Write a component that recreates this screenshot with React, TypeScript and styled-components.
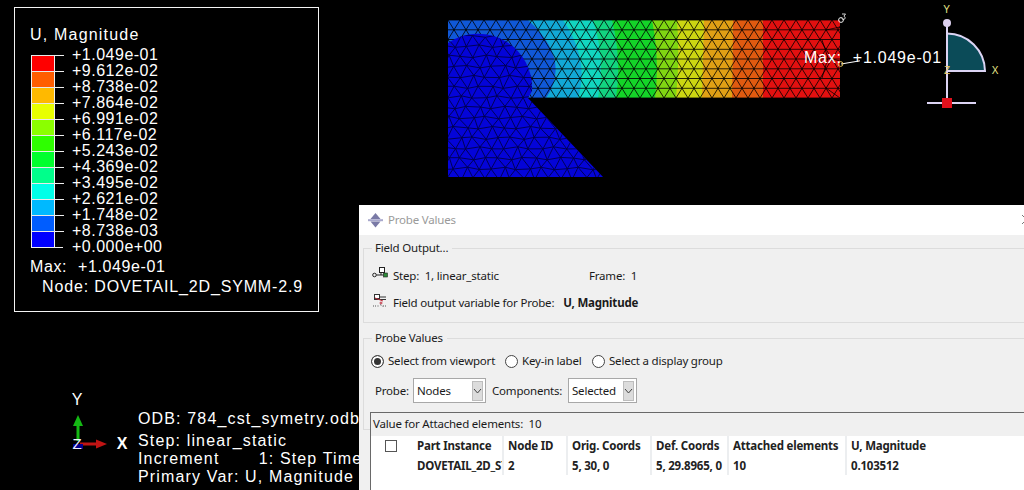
import React from "react";
import styled, { createGlobalStyle } from "styled-components";

const GlobalStyle = createGlobalStyle`
  html, body { margin: 0; padding: 0; background: #000; }
`;

const Stage = styled.div`
  position: relative;
  width: 1024px;
  height: 490px;
  overflow: hidden;
  background: #000;
  color: #fff;
  font-family: "Liberation Sans", Arial, sans-serif;
  font-size: 16px;
`;

/* ---------- viewport items (free canvas) ---------- */
const Legend = styled.section`
  position: absolute;
  left: 14px;
  top: 7px;
  box-sizing: content-box;
  width: 288px;
  height: 286px;
  border: 1px solid #f4f4f4;
  padding: 17px 0 0 15px;
  line-height: 20px;
`;
const LegendTitle = styled.div`
  height: 21px;
  letter-spacing: 1.2px;
  white-space: nowrap;
`;
const Scale = styled.div`
  display: flex;
  height: 211px;
`;
const ColorBar = styled.div`
  display: flex;
  flex-direction: column;
  box-sizing: border-box;
  width: 24px;
  height: 193px;
  margin-top: 9px;
  margin-left: 1px;
  border: 1px solid #f0f0f0;
  border-width: 0 1px 1px 1px;
`;
const ColorCell = styled.div<{ $c: string }>`
  position: relative;
  flex: 1;
  background: ${(p) => p.$c};
  border-top: 1px solid #e8e8e8;
  &::after {
    content: "";
    position: absolute;
    left: 100%;
    top: -1px;
    width: 9px;
    height: 1px;
    margin-left: 1px;
    background: #eee;
  }
`;
const BottomTick = styled.div`
  position: relative;
  &::after {
    content: "";
    position: absolute;
    left: 24px;
    top: -1px;
    width: 9px;
    height: 1px;
    background: #eee;
  }
`;
const ScaleLabels = styled.div`
  margin-left: 17px;
  margin-top: 1px;
  letter-spacing: 0.5px;
`;
const ScaleLabel = styled.div`
  height: 16px;
  line-height: 16px;
  white-space: nowrap;
`;
const MaxLine = styled.div<{ $indent?: number; $spacing: number; $word?: number }>`
  height: 20px;
  line-height: 20px;
  margin-left: ${(p) => p.$indent ?? 0}px;
  letter-spacing: ${(p) => p.$spacing}px;
  word-spacing: ${(p) => p.$word ?? 0}px;
  white-space: pre;
`;

const Mesh = styled.svg`
  position: absolute;
  left: 440px;
  top: 0;
  display: block;
`;
const ViewTriad = styled.svg`
  position: absolute;
  left: 0;
  top: 0;
  display: block;
`;
const MaxAnnotation = styled.div`
  position: absolute;
  left: 804px;
  top: 47px;
  line-height: 22px;
  letter-spacing: 0.75px;
  word-spacing: 6px;
  white-space: nowrap;
`;
const StateBlock = styled.div`
  position: absolute;
  left: 138px;
  top: 409px;
  white-space: pre;
  letter-spacing: 1.15px;
`;
const StateLine = styled.div<{ $h: number }>`
  height: ${(p) => p.$h}px;
  line-height: 20px;
`;

/* ---------- dialog ---------- */
const Dialog = styled.div`
  position: absolute;
  left: 359px;
  top: 205px;
  width: 680px;
  height: 285px;
  display: flex;
  flex-direction: column;
  background: #f0f0f0;
  color: #1a1a1a;
  font-family: "Noto Sans", "Open Sans", sans-serif;
  font-size: 11.5px;
  letter-spacing: -0.2px;
  line-height: 16px;
`;
const TitleBar = styled.header`
  flex: 0 0 30px;
  display: flex;
  align-items: center;
  gap: 5px;
  padding-left: 9px;
  background: #fff;
  color: #9a9a9a;
  position: relative;
`;
const CloseGlyph = styled.svg`
  position: absolute;
  left: 662px;
  top: 9px;
`;
const Group = styled.fieldset<{ $h: number; $mt: number }>`
  box-sizing: border-box;
  height: ${(p) => p.$h}px;
  margin: ${(p) => p.$mt}px 0 0 4px;
  padding: 0 0 0 8px;
  min-width: 0;
  border: 1px solid #dcdcdc;
  border-right: none;
`;
const GroupTitle = styled.legend`
  padding: 0 4px 0 3px;
  margin-left: 0;
  color: #222;
`;
const InfoRow = styled.div<{ $mt: number }>`
  display: flex;
  align-items: center;
  height: 16px;
  margin-top: ${(p) => p.$mt}px;
  white-space: pre;
`;
const InfoIcon = styled.svg<{ $up: number }>`
  flex: 0 0 16px;
  margin-right: 5px;
  margin-top: -${(p) => p.$up}px;
`;
const FrameInfo = styled.span`
  position: absolute;
  left: 230px;
`;
const Strong = styled.b`
  font-weight: 700;
  margin-left: 9px;
`;
const RadioRow = styled.div`
  display: flex;
  align-items: center;
  height: 16px;
  margin-top: 7px;
  margin-left: -1px;
`;
const RadioItem = styled.label<{ $w: number }>`
  display: flex;
  align-items: center;
  gap: 4px;
  width: ${(p) => p.$w}px;
  white-space: nowrap;
`;
const RadioDot = styled.span<{ $on?: boolean }>`
  box-sizing: border-box;
  flex: 0 0 13px;
  height: 13px;
  border: 1px solid #444;
  border-radius: 50%;
  background: ${(p) => (p.$on ? "#333" : "#fff")};
  box-shadow: ${(p) => (p.$on ? "inset 0 0 0 2px #fff" : "none")};
`;
const SelectRow = styled.div`
  display: flex;
  align-items: center;
  height: 25px;
  margin-top: 9px;
  margin-left: 3px;
`;
const SelectLabel = styled.span<{ $w: number }>`
  width: ${(p) => p.$w}px;
  white-space: nowrap;
`;
const Select = styled.div<{ $w: number }>`
  box-sizing: border-box;
  width: ${(p) => p.$w}px;
  height: 25px;
  display: flex;
  align-items: center;
  justify-content: space-between;
  padding: 0 2px 0 3px;
  margin-right: 6px;
  background: #fff;
  border: 1px solid #a8a8a8;
`;
const SelectArrow = styled.span`
  box-sizing: border-box;
  width: 11px;
  height: 20px;
  display: flex;
  align-items: center;
  justify-content: center;
  background: #dcdcdc;
  border: 1px solid #bdbdbd;
`;
const ResultFrame = styled.div`
  position: absolute;
  left: 11px;
  top: 207px;
  width: 669px;
  height: 78px;
  box-sizing: border-box;
  display: flex;
  flex-direction: column;
  border-top: 1px solid #696969;
  border-left: 1px solid #696969;
  background: #f0f0f0;
`;
const ResultCaption = styled.div`
  flex: 0 0 23px;
  line-height: 21px;
  padding-left: 2px;
  white-space: pre;
`;
const TableArea = styled.div`
  flex: 1;
  background: #fff;
`;
const Table = styled.div`
  display: grid;
  grid-template-columns: 41px 90px 64px 84px 77px 118px 160px;
  grid-auto-rows: 19.5px;
  height: 39px;
  font-weight: 700;
  color: #222;
`;
const Cell = styled.div<{ $first?: boolean }>`
  box-sizing: border-box;
  overflow: hidden;
  white-space: nowrap;
  padding: 2px 0 0 ${(p) => (p.$first ? 5 : 4)}px;
  line-height: 15px;
  border-left: ${(p) => (p.$first ? "none" : "2px solid #eceef0")};
`;
const CheckCell = styled.div`
  grid-row: span 2;
  padding: 4px 0 0 14px;
`;
const CheckBox = styled.span`
  display: block;
  box-sizing: border-box;
  width: 12px;
  height: 12px;
  background: #fff;
  border: 1px solid #555;
`;

/* ---------- data ---------- */
const COLORS = [
  "#ff0000", "#ff5d00", "#ffb900", "#e8ff00", "#8bff00", "#2eff00",
  "#00ff2e", "#00ff8b", "#00ffe8", "#00b9ff", "#005dff", "#0000ff",
];
const LABELS = [
  "+1.049e-01", "+9.612e-02", "+8.738e-02", "+7.864e-02", "+6.991e-02", "+6.117e-02", "+5.243e-02",
  "+4.369e-02", "+3.495e-02", "+2.621e-02", "+1.748e-02", "+8.738e-03", "+0.000e+00",
];
// band colour, then right boundary: top x, control x, bottom x
const BANDS: [string, number, number, number][] = [
  ["#e21010", 840, 840, 840],
  ["#e05a10", 763, 763, 763],
  ["#e0a015", 733, 733, 732],
  ["#ccd612", 704, 703, 702],
  ["#80d612", 677, 680, 676],
  ["#14d428", 652, 660, 655],
  ["#12d480", 612, 622, 616],
  ["#12d6c0", 593, 606, 598],
  ["#12a8d6", 563, 590, 578],
  ["#1058d8", 528, 572, 546],
];

function triLines(x0: number, x1: number, y0: number, y1: number, dx: number, dy: number, warp: number) {
  const rows = Math.round((y1 - y0) / dy);
  const cols = Math.ceil((x1 - x0) / dx) + 2;
  const P = (c: number, r: number): [number, number] => {
    const x = x0 + c * dx + (r % 2 ? dx / 2 : 0) - dx;
    const y = y0 + r * dy;
    const a = Math.sin(x * 0.21 + y * 0.13) * warp;
    const b = Math.cos(x * 0.17 - y * 0.19) * warp;
    return [x + a, y + b];
  };
  let d = "";
  const seg = (a: [number, number], b: [number, number]) => {
    d += `M${a[0].toFixed(1)} ${a[1].toFixed(1)}L${b[0].toFixed(1)} ${b[1].toFixed(1)}`;
  };
  for (let r = 0; r <= rows; r++) {
    for (let c = 0; c <= cols; c++) {
      if (c < cols) seg(P(c, r), P(c + 1, r));
      if (r < rows) {
        seg(P(c, r), P(c, r + 1));
        if (r % 2) {
          if (c < cols) seg(P(c, r), P(c + 1, r + 1));
        } else if (c > 0) {
          seg(P(c, r), P(c - 1, r + 1));
        }
      }
    }
  }
  return d;
}

const STRIP_MESH = triLines(448, 840, 20, 98, 12, 9.75, 0);
const BODY_MESH = triLines(448, 610, 36, 178, 12.5, 10.2, 1.4);
const RIGHT_END =
  "M822 40L828 58L822 78M828 58L840 61M826 30L840 27M826 88L840 98";

function App() {
  return (
    <Stage>
      <GlobalStyle />

      <Legend>
        <LegendTitle>U, Magnitude</LegendTitle>
        <Scale>
          <div>
            <ColorBar>
              {COLORS.map((c) => (
                <ColorCell key={c} $c={c} />
              ))}
            </ColorBar>
            <BottomTick />
          </div>
          <ScaleLabels>
            {LABELS.map((l) => (
              <ScaleLabel key={l}>{l}</ScaleLabel>
            ))}
          </ScaleLabels>
        </Scale>
        <MaxLine $spacing={0.6} $word={6}>Max: +1.049e-01</MaxLine>
        <MaxLine $indent={12} $spacing={0.85}>Node: DOVETAIL_2D_SYMM-2.9</MaxLine>
      </Legend>

      <Mesh width="420" height="190" viewBox="440 0 420 190">
        <defs>
          <clipPath id="strip">
            <rect x="448" y="20" width="392" height="78" />
          </clipPath>
          <clipPath id="body">
            <path d="M448 43A54 54 0 0 1 532 91L528 98L603 177H448Z" />
          </clipPath>
        </defs>
        {BANDS.map(([c, t, m, b]) => (
          <path key={c} d={`M448 20L${t} 20Q${m} 60 ${b} 98L448 98Z`} fill={c} />
        ))}
        <g clipPath="url(#strip)">
          <path d={STRIP_MESH} stroke="#000" strokeWidth="0.9" fill="none" opacity="0.9" />
          <path d={RIGHT_END} stroke="#000" strokeWidth="0.9" fill="none" opacity="0.85" />
        </g>
        <g clipPath="url(#body)">
          <rect x="448" y="20" width="160" height="160" fill="#0404d8" />
          <path d={BODY_MESH} stroke="#00004a" strokeWidth="0.9" fill="none" />
        </g>
        <path d="M841 64L877 58" stroke="#fff" strokeWidth="1" />
        <circle cx="840.5" cy="64" r="2.4" fill="none" stroke="#e8c860" strokeWidth="1" />
        <circle cx="841" cy="20" r="2.4" fill="none" stroke="#eee" strokeWidth="1" />
        <path d="M842 14h3.5l-1.6 2.2a1.7 1.7 0 1 1-2 2.4" fill="none" stroke="#eee" strokeWidth="0.9" />
      </Mesh>

      <MaxAnnotation>Max: +1.049e-01</MaxAnnotation>

      <ViewTriad width="1024" height="490" viewBox="0 0 1024 490">
        {/* top-right orientation glyph */}
        <path d="M947 33.5A38 38 0 0 1 985 71L947 71Z" fill="#0b4b58" />
        <path d="M947 33.5A38 38 0 0 1 985 71L947 71" fill="none" stroke="#dcd4f4" strokeWidth="2" />
        <path d="M947 22V104M927 103H976" stroke="#dcd4f4" strokeWidth="2" fill="none" />
        <circle cx="947" cy="23" r="4" fill="#dcd0ee" />
        <rect x="942" y="98" width="10" height="10" fill="#e0101c" />
        <text x="946.5" y="13" fontFamily="Liberation Sans" fontSize="10" fill="#e8e68a" textAnchor="middle">Y</text>
        <text x="995" y="74" fontFamily="Liberation Sans" fontSize="10" fill="#e8e68a" textAnchor="middle">X</text>
        <text x="947" y="74" fontFamily="Liberation Sans" fontSize="10" fill="#e8c860" textAnchor="middle">Z</text>
        {/* bottom-left coordinate triad */}
        <text x="77" y="405" fontFamily="Liberation Sans" fontSize="16" fill="#fff" textAnchor="middle">Y</text>
        <path d="M78 441V424" stroke="#14b814" strokeWidth="3" />
        <path d="M78 415l-5 11h10Z" fill="#14b814" />
        <path d="M80 444H97" stroke="#c01414" strokeWidth="3" />
        <path d="M107 444l-11-4.5v9Z" fill="#c01414" />
        <rect x="73" y="444" width="10" height="5" fill="#000090" />
        <text x="77" y="449" fontFamily="Liberation Sans" fontSize="15" fill="#f0f0ff" textAnchor="middle">Z</text>
        <text x="122" y="449" fontFamily="Liberation Sans" fontSize="16" fontWeight="700" fill="#fff" textAnchor="middle">X</text>
      </ViewTriad>

      <StateBlock>
        <StateLine $h={22}>ODB: 784_cst_symetry.odb</StateLine>
        <StateLine $h={18}>Step: linear_static</StateLine>
        <StateLine $h={18}>Increment       1: Step Time =    1.000</StateLine>
        <StateLine $h={18}>Primary Var: U, Magnitude</StateLine>
      </StateBlock>

      <Dialog>
        <TitleBar>
          <svg width="15" height="15" viewBox="0 0 15 15">
            <path d="M7.5 0L12.5 6H2.5Z" fill="#7a7aa6" />
            <path d="M0 6.2H15V8.2H0Z" fill="#a8a8cc" />
            <path d="M7.5 14.5L12.5 8.4H2.5Z" fill="#7a7aa6" />
          </svg>
          Probe Values
          <CloseGlyph width="12" height="12" viewBox="0 0 12 12">
            <path d="M1 1L10 10M10 1L1 10" stroke="#777" strokeWidth="1" />
          </CloseGlyph>
        </TitleBar>

        <Group $h={83} $mt={5}>
          <GroupTitle>Field Output...</GroupTitle>
          <InfoRow $mt={12}>
            <InfoIcon $up={7} width="16" height="12" viewBox="0 0 16 12">
              <circle cx="2.5" cy="8" r="1.8" fill="none" stroke="#222" />
              <path d="M4.5 8H12M9 5V8" stroke="#222" fill="none" />
              <rect x="7.5" y="0.5" width="5" height="5" fill="#fff" stroke="#222" />
              <rect x="11.5" y="6" width="4" height="4" fill="#2e8b3a" stroke="#222" strokeWidth="0.6" />
            </InfoIcon>
            Step:  1, linear_static
            <FrameInfo>Frame:  1</FrameInfo>
          </InfoRow>
          <InfoRow $mt={11}>
            <InfoIcon $up={5} width="16" height="14" viewBox="0 0 16 14">
              <rect x="2.5" y="0.5" width="5" height="4" fill="#fff" stroke="#333" />
              <path d="M2 5.5L14 5.5M8 3H14" stroke="#333" fill="none" />
              <path d="M3 4L11 7" stroke="#c03040" fill="none" />
              <path d="M9 7.5v3M7.5 9h3" stroke="#c03040" fill="none" />
              <path d="M1 12h3M5.5 12h1M8 10.5l3 2M11 12h3" stroke="#555" strokeDasharray="1 1" fill="none" />
            </InfoIcon>
            Field output variable for Probe:<Strong>U, Magnitude</Strong>
          </InfoRow>
        </Group>

        <Group $h={100} $mt={7}>
          <GroupTitle>Probe Values</GroupTitle>
          <RadioRow>
            <RadioItem $w={134}>
              <RadioDot $on />
              Select from viewport
            </RadioItem>
            <RadioItem $w={87}>
              <RadioDot />
              Key-in label
            </RadioItem>
            <RadioItem $w={160}>
              <RadioDot />
              Select a display group
            </RadioItem>
          </RadioRow>
          <SelectRow>
            <SelectLabel $w={38}>Probe:</SelectLabel>
            <Select $w={73}>
              Nodes
              <SelectArrow>
                <svg width="9" height="6" viewBox="0 0 9 6">
                  <path d="M1 1L4.5 5L8 1" fill="none" stroke="#444" />
                </svg>
              </SelectArrow>
            </Select>
            <SelectLabel $w={76}>Components:</SelectLabel>
            <Select $w={69}>
              Selected
              <SelectArrow>
                <svg width="9" height="6" viewBox="0 0 9 6">
                  <path d="M1 1L4.5 5L8 1" fill="none" stroke="#444" />
                </svg>
              </SelectArrow>
            </Select>
          </SelectRow>
        </Group>

        <ResultFrame>
          <ResultCaption>Value for Attached elements:  10</ResultCaption>
          <TableArea>
            <Table>
              <CheckCell>
                <CheckBox />
              </CheckCell>
              <Cell $first>Part Instance</Cell>
              <Cell>Node ID</Cell>
              <Cell>Orig. Coords</Cell>
              <Cell>Def. Coords</Cell>
              <Cell>Attached elements</Cell>
              <Cell>U, Magnitude</Cell>
              <Cell $first>DOVETAIL_2D_SYMM-2</Cell>
              <Cell>2</Cell>
              <Cell>5, 30, 0</Cell>
              <Cell>5, 29.8965, 0</Cell>
              <Cell>10</Cell>
              <Cell>0.103512</Cell>
            </Table>
          </TableArea>
        </ResultFrame>
      </Dialog>
    </Stage>
  );
}

export default App;
